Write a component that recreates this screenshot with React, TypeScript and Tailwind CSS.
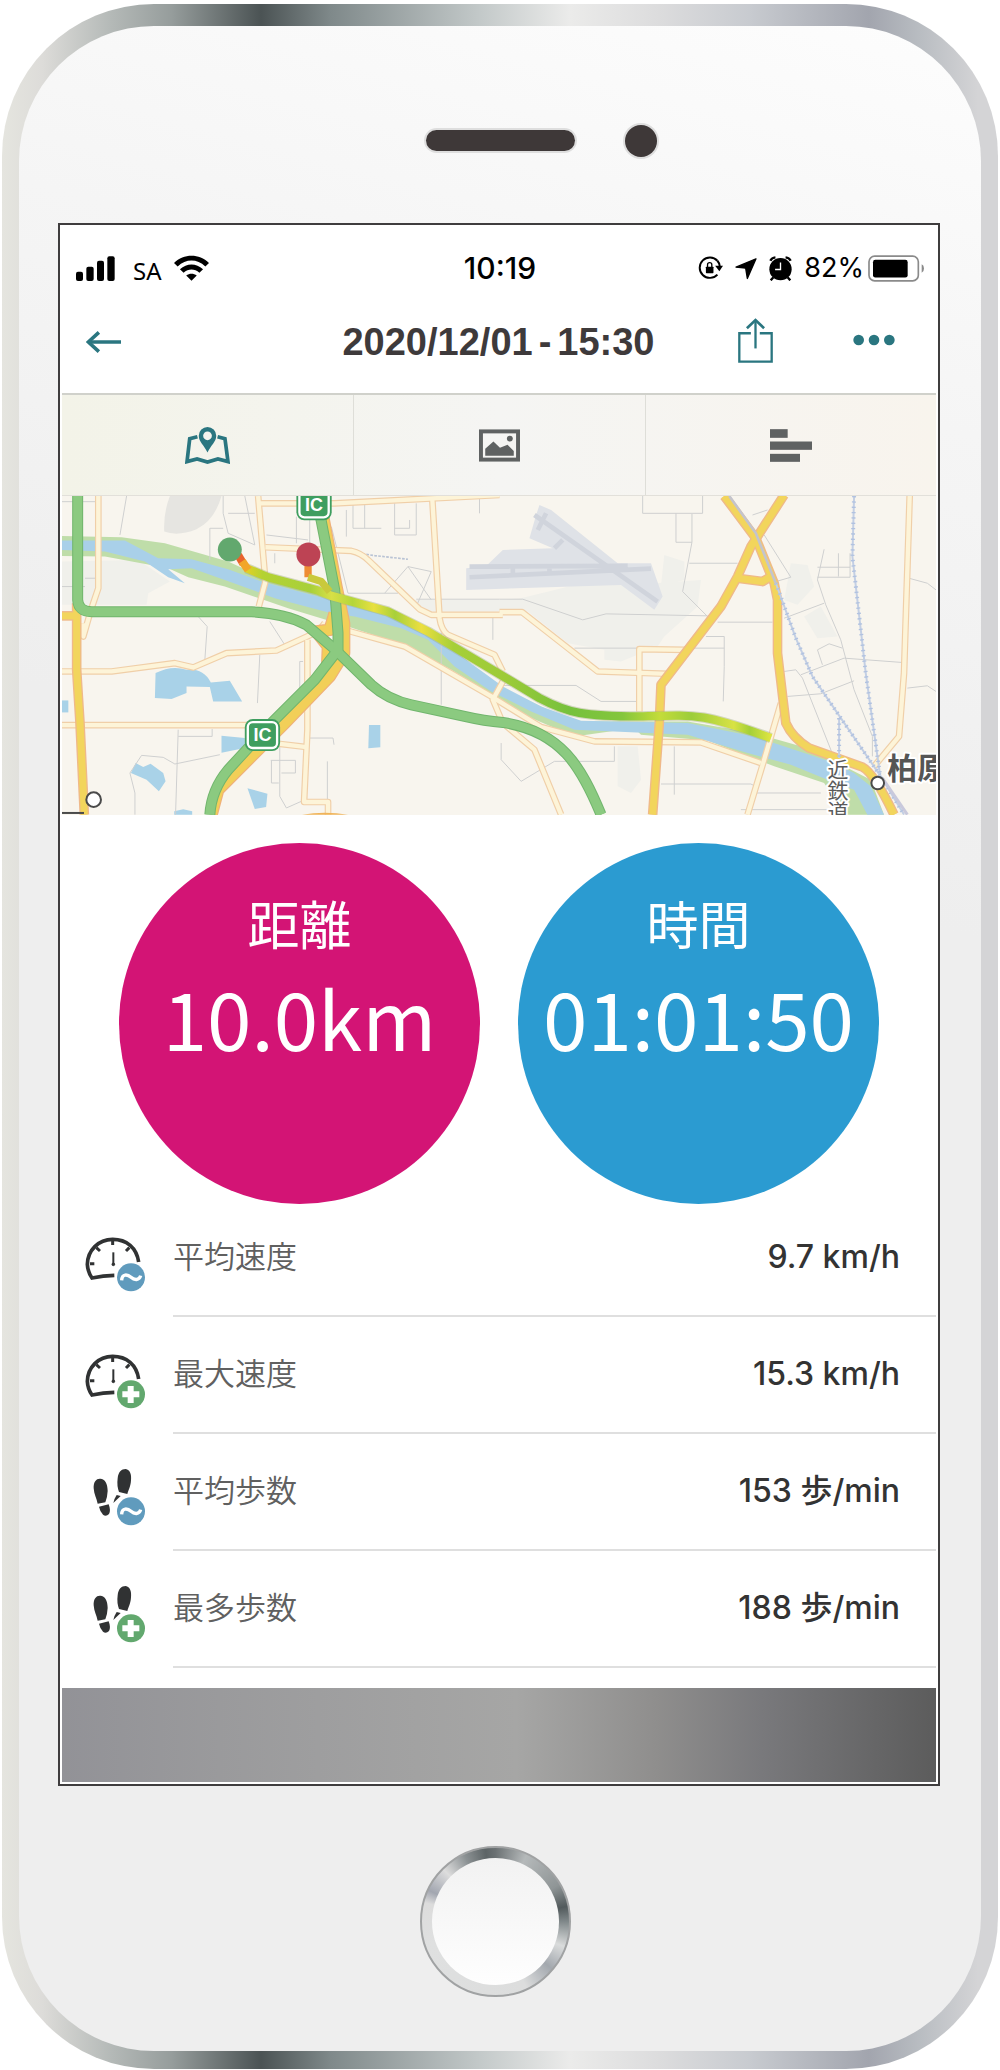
import type { ReactNode } from 'react'
import { clsx } from 'clsx'

const STATS = [
  { label: '平均速度', value: '9.7 km/h', icon: 'gauge', badge: 'avg' },
  { label: '最大速度', value: '15.3 km/h', icon: 'gauge', badge: 'max' },
  { label: '平均歩数', value: '153 歩/min', icon: 'steps', badge: 'avg' },
  { label: '最多歩数', value: '188 歩/min', icon: 'steps', badge: 'max' },
] as const

/* Status bar */

function SignalIcon() {
  return (
    <svg viewBox="78 103 117 75" className="h-[25px] w-[39px]" aria-hidden="true">
      <rect x="78" y="150" width="21" height="28" rx="6" />
      <rect x="109" y="135" width="22" height="43" rx="6" />
      <rect x="141" y="117" width="21" height="61" rx="6" />
      <rect x="172" y="104" width="22" height="74" rx="6" />
    </svg>
  )
}

function WifiIcon() {
  return (
    <svg viewBox="373 103 106 77" className="h-[26px] w-[35px]" aria-hidden="true">
      <path d="M373 126C403 97 449 97 479 126L468 137C442 113 410 113 384 137Z" />
      <path d="M391 145C412 126 440 126 461 145L450 156C435 143 417 143 402 156Z" />
      <path d="M410 164C420 157 432 157 442 164L426 180Z" />
    </svg>
  )
}

function RotationLockIcon() {
  return (
    <svg viewBox="602 108 76 72" className="h-6 w-[25px]" aria-hidden="true">
      <path d="M661 122A31 31 0 1 0 661 164" fill="none" stroke="currentColor" strokeWidth="6" />
      <path d="M661 122Q667 129 668 138" fill="none" stroke="currentColor" strokeWidth="6" />
      <path d="M654 137H678L667 154Z" />
      <rect x="626" y="140" width="23" height="20" rx="2" />
      <path d="M631 142V134a6.5 6.5 0 0 1 13 0V142" fill="none" stroke="currentColor" strokeWidth="4" />
    </svg>
  )
}

function LocationIcon() {
  return (
    <svg viewBox="715 111 66 68" className="h-[23px] w-[22px]" aria-hidden="true">
      <path
        d="M778 116L752 175L747 144L718 141Z"
        stroke="currentColor"
        strokeWidth="4"
        strokeLinejoin="round"
      />
    </svg>
  )
}

function AlarmIcon() {
  return (
    <svg viewBox="815 102 68 74" className="h-[25px] w-[23px]" aria-hidden="true">
      <circle cx="849" cy="141" r="33" />
      <path
        d="M819 116Q823 107 834 106M864 106Q875 107 879 116M828 165L820 174M870 165L878 174"
        fill="none"
        stroke="currentColor"
        strokeWidth="7"
      />
      <path d="M849 121V142H833" fill="none" stroke="#fff" strokeWidth="4" />
    </svg>
  )
}

function BatteryIcon() {
  return (
    <svg viewBox="1104 100 168 80" className="h-[27px] w-14" aria-hidden="true">
      <rect x="1107" y="103" width="148" height="74" rx="17" fill="none" stroke="#8a8a8a" strokeWidth="5" />
      <rect x="1119" y="114" width="104" height="53" rx="7" />
      <path d="M1265 127Q1272 130 1272 140Q1272 150 1265 153Z" fill="#8a8a8a" />
    </svg>
  )
}

function StatusBar() {
  return (
    <div className="mt-6 grid h-[38px] grid-cols-[1fr_auto_1fr] items-center pr-3 pl-3.5 text-black">
      <div className="flex items-center">
        <SignalIcon />
        <span className="mr-3 ml-[18px] pt-1.5 font-['Noto_Sans',sans-serif] text-[24px] leading-7">
          SA
        </span>
        <WifiIcon />
      </div>
      <time className="font-['Inter',sans-serif] text-[30px] leading-8 font-medium">10:19</time>
      <div className="flex items-center justify-end">
        <RotationLockIcon />
        <span className="w-3" />
        <LocationIcon />
        <span className="w-3" />
        <AlarmIcon />
        <span className="mr-1 ml-3 font-['Inter',sans-serif] text-[27px] leading-8">82%</span>
        <BatteryIcon />
      </div>
    </div>
  )
}

/* Header */

function Header() {
  return (
    <header className="grid h-[106px] grid-cols-[1fr_auto_1fr] items-center pr-[41px] pl-6 text-[#2a7680]">
      <button type="button" aria-label="戻る" className="justify-self-start pt-1">
        <svg viewBox="107 335 106 66" className="h-[22px] w-[35px]" fill="none" stroke="currentColor">
          <path d="M213 368H114" strokeWidth="11" />
          <path d="M146 339L114 368L146 397" strokeWidth="11" />
        </svg>
      </button>
      <h1 className="flex gap-1.5 pt-1 pl-4 font-['Liberation_Sans',Arial,sans-serif] text-[38px] leading-10 font-bold text-[#3e3a3b]">
        <span>2020/12/01</span>
        <span>-</span>
        <span>15:30</span>
      </h1>
      <div className="flex items-center justify-end gap-20">
        <button type="button" aria-label="共有">
          <svg viewBox="716 293 106 136" className="h-[45px] w-[35px]" fill="none" stroke="currentColor">
            <path d="M755 339H720V425H818V339H782" strokeWidth="7" />
            <path d="M769 385V300" strokeWidth="7" />
            <path d="M743 324L769 299L795 324" strokeWidth="8" />
          </svg>
        </button>
        <button type="button" aria-label="メニュー">
          <svg viewBox="1063 346 126 36" className="h-3 w-[42px]" fill="currentColor">
            <circle cx="1080" cy="364" r="16" />
            <circle cx="1126" cy="364" r="16" />
            <circle cx="1172" cy="364" r="16" />
          </svg>
        </button>
      </div>
    </header>
  )
}

/* Tabs */

function Tab({ label, active, children }: { label: string; active?: boolean; children: ReactNode }) {
  return (
    <button
      type="button"
      role="tab"
      aria-label={label}
      aria-selected={!!active}
      className={clsx(
        'flex items-center justify-center border-l border-[#deded8] first:border-l-0',
        active ? 'text-[#2a7680]' : 'text-[#5f6262]',
      )}
    >
      {children}
    </button>
  )
}

function Tabs() {
  return (
    <div
      role="tablist"
      className="grid h-[103px] grid-cols-3 border-t-2 border-b border-t-[#d0d1cb] border-b-[#e2e0da] bg-linear-to-r from-[#f3f3e8] via-[#f5f5f3] to-[#f8f4ed]"
    >
      <Tab label="地図" active>
        <svg viewBox="404 616 134 110" className="h-[37px] w-[45px]" fill="none" stroke="currentColor">
          <path
            d="M441 645L418 651L410 719L440 711L471 720L502 711L532 719L523 651L501 645"
            strokeWidth="11"
          />
          <path
            d="M471 692C461 670 445 660 445 642a26 26 0 0 1 52 0C497 660 481 670 471 692Z"
            fill="currentColor"
            stroke="none"
          />
          <circle cx="471" cy="642" r="13" fill="#f4f4ee" stroke="none" />
        </svg>
      </Tab>
      <Tab label="写真">
        <svg viewBox="1285 625 125 98" className="h-[33px] w-[41px]">
          <rect x="1291" y="631" width="113" height="86" fill="none" stroke="currentColor" strokeWidth="12" />
          <path d="M1304 705V684L1329 662L1349 681L1372 672L1391 691V705Z" fill="currentColor" />
          <circle cx="1379" cy="653" r="9" fill="currentColor" />
        </svg>
      </Tab>
      <Tab label="グラフ">
        <svg viewBox="812 625 126 98" className="h-[33px] w-[42px]" fill="currentColor">
          <rect x="812" y="625" width="53" height="26" />
          <rect x="812" y="662" width="126" height="25" />
          <rect x="812" y="699" width="90" height="24" />
        </svg>
      </Tab>
    </div>
  )
}

/* Map */

const MINOR_ROADS =
  'M215 18L195 135M505 18V70L520 130L600 165M520 70H600M570 18L600 165M465 210V115H505M635 135L760 150' +
  'M725 80V160M765 90V170M895 40V115H980M930 45V115M1020 40V135H1085V40M1065 90V115H1020M1275 18V70M875 60V140' +
  'M830 110L880 310H1030M990 310L1060 230L1130 245L1085 350M1060 230L1130 330M1085 328H1335M1160 380V645' +
  'M1315 380V450M660 190V220M430 380L457 410L450 510M645 395L690 465M615 495L608 640M735 515V620M745 515H735' +
  'M370 720L362 975M370 740H472V718M225 850L260 797L325 803L360 823L495 795M225 850L240 910V975M675 770V920L695 955L740 935' +
  'M648 812H722V850H680M650 812V880H672M765 745H835L838 765M818 815V930M90 265H125M21 290H90M21 35H125' +
  'M1765 18V70H1945V18M1865 70V157H1913V72M1913 157L1885 305L1960 380M1905 220H2050M1335 328H1405L1585 390L1655 372L1960 378' +
  'M1990 397H2155M1955 440H2010V530L2007 635M1560 475H2010M1335 587H1565L1640 635H1750M1820 883H2090L2100 888M2105 910H2300' +
  'M2310 178L2290 270L2315 345L2360 450L2400 600L2455 740V800M2290 262H2388V190M2290 232H2388M2353 190V260' +
  'M2190 385L2310 340M2190 545L2225 540L2245 565L2340 805M2200 620L2300 612L2400 573M2290 480L2325 462L2365 475M2305 525L2290 480' +
  'M2240 555L2370 505L2545 518M2565 265L2620 280L2646 300M2560 595L2620 588L2646 605M1340 760V810L1400 875L1500 815H1680V770' +
  'M1860 770V915M2095 75L2140 60M2130 135L2210 262L2165 275M2060 960L2320 960'

const LIGHT_ROADS = [
  'M130 18V295L108 360L85 440V400',
  'M610 18L632 275L612 350',
  'M615 40H840L1335 15',
  'M632 172L890 183Q920 190 940 210L1095 358L1130 375H1345',
  'M1133 25L1155 385Q1160 420 1180 435L1320 495L1345 545',
  'M21 545H170L360 520L415 533L515 490L665 482L790 425L810 400',
  'M758 450V720L748 937H820V975',
  'M21 706H600',
  'M670 762L755 772',
  'M870 420L1050 470L1310 620L1460 712L1620 755L1940 758L2120 820',
  'M1345 575L1315 630L1345 700L1440 780L1520 975',
  'M1335 367H1403L1630 545L1840 552',
  'M1755 665V478L1895 480',
  'M2180 640L2130 810L2080 975',
  'M2567 18L2550 550L2535 740L2460 830',
]

const MAJOR_ROADS = [
  'M65 340V540L75 700L88 975',
  'M21 378H70',
  'M2010 18L2105 145L2160 280L2170 330V490L2195 700Q2215 745 2265 775L2425 832Q2460 850 2520 975',
  'M2190 15L2090 170L2050 260L2000 350L1820 585L1815 700L1795 975',
  'M2050 265L2125 275L2150 260',
]

const RAMPS = [
  'M805 80L845 290L868 400V490L825 560L690 700L590 800L490 900L470 975',
  'M840 370L825 420L785 425L820 470L818 520',
]

const HIGHWAYS = [
  'M68 18V330Q70 365 110 366H590Q690 370 755 405L840 478L950 585Q1000 630 1070 645L1230 680Q1290 694 1345 698C1520 725 1580 830 1640 975',
  'M797 80L840 300L850 430V480L780 570L640 710L520 840Q470 900 465 975',
]

const ROUTE =
  'M575 235L640 262L790 302L830 318L1000 365L1120 425L1350 562L1455 625C1540 670 1590 680 1755 680C1930 675 1945 670 2150 745'

const RAILS = ['M2400 18L2395 200L2435 550L2480 870', 'M2165 280L2225 445L2275 560L2350 670L2480 860L2550 975', 'M2355 685V805']

function IcSign({ x, y }: { x: number; y: number }) {
  return (
    <g transform={`translate(${x} ${y})`}>
      <rect x="-53" y="-48" width="106" height="96" rx="24" fill="#3f9e5f" />
      <rect x="-44" y="-39" width="88" height="78" rx="15" fill="#3f9e5f" stroke="#fff" strokeWidth="7" />
      <text
        y="19"
        textAnchor="middle"
        fontSize="54"
        fontWeight="700"
        fill="#fff"
        className="font-['Liberation_Sans',Arial,sans-serif]"
      >
        IC
      </text>
    </g>
  )
}

function TrackMap() {
  return (
    <svg viewBox="21 18 2625 957" className="block h-auto w-full bg-[#f8f5ee]" role="img" aria-label="コースの地図">
      <defs>
        <linearGradient id="route" gradientUnits="userSpaceOnUse" x1="560" y1="0" x2="2150" y2="0">
          <stop offset="0" stopColor="#f0d020" />
          <stop offset="0.04" stopColor="#b4d232" />
          <stop offset="0.13" stopColor="#a8d03a" />
          <stop offset="0.17" stopColor="#d8e046" />
          <stop offset="0.21" stopColor="#b4d63a" />
          <stop offset="0.25" stopColor="#e8e040" />
          <stop offset="0.29" stopColor="#a8d03a" />
          <stop offset="0.34" stopColor="#ecdf40" />
          <stop offset="0.4" stopColor="#a6cf38" />
          <stop offset="0.5" stopColor="#9ccb38" />
          <stop offset="0.62" stopColor="#76c13c" />
          <stop offset="0.72" stopColor="#84c63c" />
          <stop offset="0.79" stopColor="#c4dc3a" />
          <stop offset="0.85" stopColor="#9ccd3a" />
          <stop offset="0.93" stopColor="#d8e244" />
          <stop offset="0.96" stopColor="#a4d038" />
          <stop offset="1" stopColor="#dfe540" />
        </linearGradient>
      </defs>

      {/* built-up areas */}
      <g fill="#f0f0eb">
        <path d="M21 215L250 210L345 275L280 310L275 345L21 345Z" />
        <path d="M1060 330H1340L1400 325L1560 285L1800 280L1940 270L1930 350L1830 440L1810 470L1700 515L1650 510V480L1540 460L1420 365H1130Z" />
        <path d="M1830 195L1890 215V270L1820 290Z" />
        <path d="M2210 220L2260 225L2280 290L2230 345L2190 330Z" />
        <path d="M2250 380L2300 350L2350 440L2290 445Z" />
        <path d="M1690 770H1750L1760 870L1730 910L1690 890Z" />
        <path d="M330 18H500Q480 90 425 118Q370 140 328 125Q325 70 345 18Z" fill="#e6e5e1" />
      </g>

      {/* airport */}
      <path
        d="M1235 235L1295 228L1345 180L1495 175L1425 145L1445 75L1455 45L1490 60L1690 220L1790 220L1825 320L1800 360L1700 285L1235 300Z"
        fill="#dfe2e7"
      />
      <path
        d="M1245 262L1790 236M1245 230L1720 228M1440 75L1810 335M1475 70L1450 120M1525 150L1500 175M1375 235V260M1485 228V255"
        fill="none"
        stroke="#d0d4dc"
        strokeWidth="14"
      />

      {/* river and its banks */}
      <path
        d="M21 138L200 142L330 160L520 215L640 270L830 320L960 365L1100 405L1335 590L1480 660L1580 695L1900 695L2100 730L2240 770L2370 830L2450 870L2490 975H2370L2310 880L2160 830L1960 752L1760 735L1740 715L1560 740L1420 680L1190 540L1060 470L880 410L700 355L510 290L400 262L340 235L150 200L21 198Z"
        fill="#bfdda9"
      />
      <path
        d="M21 152H210L310 205L410 208L520 238L620 275L830 330L980 375L1090 405L1345 590L1460 650L1580 693L1900 700L2100 740L2250 790L2340 820L2400 850L2450 890L2490 975H2440L2400 900L2320 870L2210 825L2080 790L1900 735L1560 720L1430 665L1310 605L1200 530L1120 450L1040 415L900 380L830 370L660 325L510 270L410 235L340 238L390 280L340 262L270 215L150 185L21 180Z"
        fill="#a9d0e9"
      />

      {/* ponds */}
      <g fill="#a9d2e8">
        <path d="M302 550Q350 525 395 540Q445 535 468 578L525 573L562 635H475L465 592L395 590V610L350 628L300 625Z" />
        <rect x="21" y="632" width="19" height="36" />
        <path d="M943 706H977V773L941 776Z" />
        <path d="M500 738L570 745V775L500 789Z" />
        <path d="M228 850L242 820L265 832L287 822L325 850L332 875L312 905L275 870Z" />
        <path d="M578 896L638 912L634 952L600 958Z" />
        <path d="M358 965L385 959L412 965V975H358Z" />
      </g>

      <path d={MINOR_ROADS} fill="none" stroke="#cfd0d0" strokeWidth="3" />
      <path d="M840 180L960 197L1060 208" fill="none" stroke="#b9c3d4" strokeWidth="5" strokeDasharray="8 4" />

      <g fill="none" strokeLinejoin="round">
        {LIGHT_ROADS.map((d) => (
          <path key={d} d={d} stroke="#f0cfa8" strokeWidth="20" />
        ))}
        {LIGHT_ROADS.map((d) => (
          <path key={d} d={d} stroke="#fdf4d8" strokeWidth="13" />
        ))}
        {MAJOR_ROADS.map((d) => (
          <path key={d} d={d} stroke="#efb98a" strokeWidth="29" />
        ))}
        {MAJOR_ROADS.map((d) => (
          <path key={d} d={d} stroke="#f2d55c" strokeWidth="21" />
        ))}
        {RAMPS.map((d) => (
          <path key={d} d={d} stroke="#efb07a" strokeWidth="38" />
        ))}
        {RAMPS.map((d) => (
          <path key={d} d={d} stroke="#f2cf58" strokeWidth="31" />
        ))}
        {HIGHWAYS.map((d) => (
          <path key={d} d={d} stroke="#71b56d" strokeWidth="33" />
        ))}
        {HIGHWAYS.map((d) => (
          <path key={d} d={d} stroke="#8bca80" strokeWidth="27" />
        ))}
        <path d="M2025 18L2105 130L2165 280" stroke="#c4c4cc" strokeWidth="8" />
        {RAILS.map((d) => (
          <path key={d} d={d} stroke="#c3cfe4" strokeWidth="6" />
        ))}
        {RAILS.map((d) => (
          <path key={d} d={d} stroke="#b1c2e0" strokeWidth="12" strokeDasharray="4 12" />
        ))}
        <path d="M2485 865L2560 975" stroke="#c9c9dc" strokeWidth="9" />
      </g>
      <path d="M742 975Q810 963 880 975Z" fill="#f0b45a" />

      {/* recorded track */}
      <g fill="none" strokeLinejoin="round">
        <path d={ROUTE} stroke="#9aa77a" strokeOpacity="0.4" strokeWidth="31" />
        <path d={ROUTE} stroke="url(#route)" strokeWidth="25" />
        <path d="M550 195L566 222" stroke="#e8622c" strokeWidth="24" />
        <path d="M562 214L580 240" stroke="#f2a62a" strokeWidth="24" />
        <path d="M760 220V262" stroke="#ee8c34" strokeWidth="22" />
        <path d="M760 262L800 275L825 305" stroke="#c9c93c" strokeWidth="22" />
      </g>
      <circle cx="525" cy="179" r="36" fill="#62a86e" />
      <circle cx="761" cy="194" r="36" fill="#bd4354" />

      <IcSign x={778} y={43} />
      <IcSign x={623} y={736} />

      {/* stations */}
      <path d="M21 970H87" stroke="#4a4a4a" strokeWidth="6" />
      <circle cx="116" cy="930" r="22" fill="#fff" stroke="#4a4a4a" strokeWidth="6" />
      <circle cx="2471" cy="880" r="19" fill="#fff" stroke="#4a4a4a" strokeWidth="6" />
      <g
        className="font-['Noto_Sans_CJK_JP',sans-serif]"
        fill="#5a5a5a"
        stroke="#fff"
        strokeWidth="12"
        strokeLinejoin="round"
        paintOrder="stroke"
      >
        <text x="2352" y="808" fontSize="63" writingMode="vertical-rl">
          近鉄道
        </text>
        <text x="2500" y="868" fontSize="90" fontWeight="700" fill="#555">
          柏原
        </text>
      </g>
    </svg>
  )
}

/* Summary and stats */

function Summary({ label, value, className }: { label: string; value: string; className: string }) {
  return (
    <div
      className={clsx(
        "flex size-[361px] flex-col items-center rounded-full font-['Noto_Sans_CJK_JP',sans-serif] text-white",
        className,
      )}
    >
      <span className="text-[52px] leading-[56px]">{label}</span>
      <span className="text-[80px] leading-[130px] whitespace-nowrap">{value}</span>
    </div>
  )
}

function StatIcon({ icon, badge }: { icon: 'gauge' | 'steps'; badge: 'avg' | 'max' }) {
  return (
    <svg viewBox="105 66 186 210" className="h-[70px] w-[62px]" aria-hidden="true">
      {icon === 'gauge' ? (
        <g fill="none" stroke="#303233">
          <path d="M266 183C260 140 230 115 188 115C145 115 113 148 112 190Q113 212 126 231Q160 224 193 223" strokeWidth="11" />
          <path d="M188 118V132M120 188H133M139 140L150 150M238 140L228 150" strokeWidth="9" />
          <path d="M190 154V190" strokeWidth="6" />
          <circle cx="190" cy="190" r="4" fill="#303233" strokeWidth="3" />
        </g>
      ) : (
        <g fill="#303233" transform="translate(0 18)">
          <path d="M131 142C130 122 139 112 151 113C165 114 173 128 173 150Q172 170 166 184L143 188C140 172 132 160 131 142Z" />
          <path d="M147 197L176 190Q183 208 177 219Q168 228 159 221Q150 212 147 197Z" />
          <path d="M203 112C205 93 214 84 227 84C240 86 245 100 243 118C242 136 236 146 232 159L207 153Q200 135 203 112Z" />
          <path d="M200 162L212 165L190 186Q192 174 200 162Z" />
        </g>
      )}
      <circle cx="243" cy="229" r="45" fill="#fff" />
      <circle cx="243" cy="229" r="42" fill={badge === 'avg' ? '#609bbd' : '#62a86e'} />
      {badge === 'avg' ? (
        <path d="M215 238C216 217 233 220 243 229S268 239 272 224" fill="none" stroke="#fff" strokeWidth="10" />
      ) : (
        <path d="M217 229H268M242 204V255" stroke="#fff" strokeWidth="18" />
      )}
    </svg>
  )
}

function Stats() {
  return (
    <dl>
      {STATS.map(({ label, value, icon, badge }) => (
        <div key={label} className="flex h-[117px] pl-[23px]">
          <div className="flex w-[88px] items-center">
            <StatIcon icon={icon} badge={badge} />
          </div>
          <div className="flex flex-1 items-center justify-between border-b-2 border-[#dfdfdf] pr-9">
            <dt className="pb-1 font-['Noto_Sans_CJK_JP',sans-serif] text-[31px] leading-10 font-[350] text-[#606060]">
              {label}
            </dt>
            <dd className="font-['Inter','Noto_Sans_CJK_JP',sans-serif] text-[32px] leading-10 font-medium text-[#333]">
              {value}
            </dd>
          </div>
        </div>
      ))}
    </dl>
  )
}

export default function App() {
  return (
    <div className="bg-white px-0.5 pt-1">
      <div className="rounded-[152px] bg-[linear-gradient(90deg,#e5e5df_0%,#dddcd9_4%,#b4b9b7_11%,#969d9c_17%,#4b5354_26%,#7f898a_33%,#c3c9c9_48%,#ebebea_57%,#dcdcdd_66%,#c8cbd0_75%,#a2a5ae_87%,#b8bcc1_92%,#d4d4d6_98%)] px-[17px] pt-[22px] pb-[18px]">
        <div className="flex flex-col items-center rounded-[135px] bg-[linear-gradient(195deg,#fdfdfd_0%,#f5f5f5_18%,#eeeeee_40%)] pr-[41px] pb-[54px] pl-[39px]">
          <div className="flex h-[197px] w-full items-center justify-center pt-8">
            <div className="ml-[84px] h-[21px] w-[149px] rounded-full bg-[#3e3838] ring-2 ring-[#dedede]" />
            <div className="ml-[50px] size-8 rounded-full bg-[#3e3838] ring-2 ring-[#dedede]" />
          </div>

          <main className="w-full border-2 border-[#3f3d3e] bg-white px-0.5 pb-0.5">
            <StatusBar />
            <Header />
            <Tabs />
            <TrackMap />
            <div className="-mb-1 flex justify-center gap-[38px] pt-7">
              <Summary label="距離" value="10.0km" className="bg-[#d31475] pt-[52px]" />
              <Summary label="時間" value="01:01:50" className="bg-[#2b9bd1] pt-[52px]" />
            </div>
            <Stats />
            <div className="mt-5 h-[94px] bg-[linear-gradient(90deg,#929297_0%,#9a9a9c_18%,#a6a6a5_52%,#8f8e8d_68%,#79797c_80%,#5c5c5c_100%)]" />
          </main>

          <button
            type="button"
            aria-label="ホーム"
            className="mt-[60px] mr-2 flex size-[151px] items-center justify-center rounded-full border-2 border-[#a0a2a3] bg-[conic-gradient(#6b7173_0deg,#b5b9ba_25deg,#8f9596_60deg,#525a5c_78deg,#80888a_90deg,#dadcdc_110deg,#a3a8ae_130deg,#dcdddd_155deg,#dfe0e0_250deg,#dcdcdc_285deg,#a2a6b0_295deg,#dddddd_315deg,#8b9193_335deg,#5d6466_352deg,#6b7173_360deg)]"
          >
            <span className="size-[127px] rounded-full bg-linear-to-b from-[#f2f2f2] to-[#fefefe]" />
          </button>
        </div>
      </div>
    </div>
  )
}
